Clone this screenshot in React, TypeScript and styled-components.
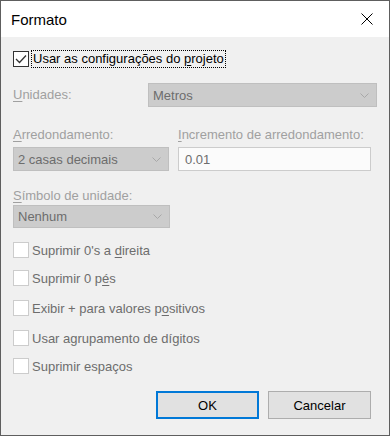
import styled, { createGlobalStyle } from 'styled-components';

const GlobalStyle = createGlobalStyle`
  html, body {
    margin: 0;
    padding: 0;
    background: #ffffff;
  }
  body {
    font-family: 'Liberation Sans', Arial, sans-serif;
    font-size: 13px;
  }
`;

const Window = styled.div`
  width: 390px;
  height: 436px;
  box-sizing: border-box;
  border: 1px solid #5e5e5e;
  background: #f0f0f0;
  display: flex;
  flex-direction: column;
`;

const TitleBar = styled.div`
  height: 36px;
  background: #ffffff;
  display: flex;
  align-items: center;
  justify-content: space-between;
  padding: 0 16px 0 10px;
`;

const Title = styled.span`
  font-family: 'Liberation Sans', Arial, sans-serif;
  font-size: 15px;
  color: #000;
  margin-top: 1px;
`;

const Body = styled.div`
  flex: 1;
  display: flex;
  flex-direction: column;
  padding: 14px 12px 0 12px;
`;

const Key = styled.u`
  text-decoration: underline;
  text-underline-offset: 2px;
`;

const CheckRow = styled.label<{ $top: number }>`
  display: flex;
  align-items: center;
  gap: 3px;
  margin-top: ${(p) => p.$top}px;
  height: 16px;
  color: #6d6d6d;
  white-space: nowrap;
`;

const Box = styled.span<{ $active?: boolean }>`
  width: 16px;
  height: 16px;
  box-sizing: border-box;
  border: 1px solid ${(p) => (p.$active ? '#333333' : '#cccccc')};
  background: #ffffff;
  display: flex;
  align-items: center;
  justify-content: center;
  flex: none;
`;

const FocusText = styled.span`
  outline: 1px dotted #000;
  outline-offset: 0;
  padding: 0 1px;
  color: #000;
  line-height: 16px;
`;

const FieldRow = styled.div<{ $top: number }>`
  display: grid;
  grid-template-columns: 135px 229px;
  align-items: center;
  margin-top: ${(p) => p.$top}px;
`;

const Label = styled.span<{ $top?: number }>`
  color: #a0a0a0;
  margin-top: ${(p) => p.$top ?? 0}px;
  line-height: 16px;
  white-space: nowrap;
`;

const PairRow = styled.div<{ $top: number }>`
  display: grid;
  grid-template-columns: 156px 193px;
  column-gap: 9px;
  align-items: center;
  margin-top: ${(p) => p.$top}px;
`;

const Select = styled.div<{ $w?: number; $h?: number }>`
  height: ${(p) => p.$h ?? 24}px;
  width: ${(p) => (p.$w ? `${p.$w}px` : 'auto')};
  box-sizing: border-box;
  background: #cccccc;
  border: 1px solid #bfbfbf;
  color: #6d6d6d;
  display: flex;
  align-items: center;
  justify-content: space-between;
  padding: 0 7px 0 4px;
`;

const Input = styled.div`
  height: 24px;
  box-sizing: border-box;
  background: #fbfbfb;
  border: 1px solid #cccccc;
  color: #6d6d6d;
  display: flex;
  align-items: center;
  padding: 0 6px;
`;

const Footer = styled.div`
  display: flex;
  justify-content: flex-end;
  gap: 9px;
  margin-top: 17px;
  padding-right: 6px;
`;

const Button = styled.button<{ $primary?: boolean }>`
  width: 103px;
  height: 28px;
  box-sizing: border-box;
  background: #e1e1e1;
  border: ${(p) => (p.$primary ? '2px solid #0078d7' : '1px solid #adadad')};
  font-family: 'Liberation Sans', Arial, sans-serif;
  font-size: 13px;
  color: #000;
  padding: 0;
`;

function Chevron() {
  return (
    <svg width="9" height="5" viewBox="0 0 9 5">
      <path d="M0.5 0.5 L4.5 4.5 L8.5 0.5" fill="none" stroke="#a8a8a8" strokeWidth="1" />
    </svg>
  );
}

function Check({ checked, active, label, top }: { checked?: boolean; active?: boolean; label: React.ReactNode; top: number }) {
  return (
    <CheckRow $top={top}>
      <Box $active={active}>
        {checked && (
          <svg width="12" height="10" viewBox="0 0 12 10">
            <path d="M1 5 L4.5 8.5 L11 1.5" fill="none" stroke="#333" strokeWidth="1.3" />
          </svg>
        )}
      </Box>
      {label}
    </CheckRow>
  );
}

export default function App() {
  return (
    <>
      <GlobalStyle />
      <Window>
        <TitleBar>
          <Title>Formato</Title>
          <svg width="12" height="12" viewBox="0 0 12 12">
            <path d="M0.5 0.5 L11.5 11.5 M11.5 0.5 L0.5 11.5" stroke="#000" strokeWidth="1" />
          </svg>
        </TitleBar>
        <Body>
          <Check
            top={0}
            checked
            active
            label={
              <FocusText>
                Usar as configurações do <Key>p</Key>rojeto
              </FocusText>
            }
          />
          <FieldRow $top={16}>
            <Label>
              <Key>U</Key>nidades:
            </Label>
            <Select>
              Metros
              <Chevron />
            </Select>
          </FieldRow>
          <PairRow $top={20}>
            <Label>
              <Key>A</Key>rredondamento:
            </Label>
            <Label>
              <Key>I</Key>ncremento de arredondamento:
            </Label>
          </PairRow>
          <PairRow $top={4}>
            <Select>
              2 casas decimais
              <Chevron />
            </Select>
            <Input>0.01</Input>
          </PairRow>
          <Label $top={17}>
            <Key>S</Key>ímbolo de unidade:
          </Label>
          <PairRow $top={1}>
            <Select $w={157} $h={23}>
              Nenhum
              <Chevron />
            </Select>
          </PairRow>
          <Check top={14} label={<span>Suprimir 0's a <Key>d</Key>ireita</span>} />
          <Check top={12} label={<span>Suprimir 0 p<Key>é</Key>s</span>} />
          <Check top={14} label={<span>Exibir + para valores p<Key>o</Key>sitivos</span>} />
          <Check top={14} label={<span>Usar agrupamento de dígitos</span>} />
          <Check top={12} label={<span>Suprimir espaços</span>} />
          <Footer>
            <Button $primary>OK</Button>
            <Button>Cancelar</Button>
          </Footer>
        </Body>
      </Window>
    </>
  );
}
